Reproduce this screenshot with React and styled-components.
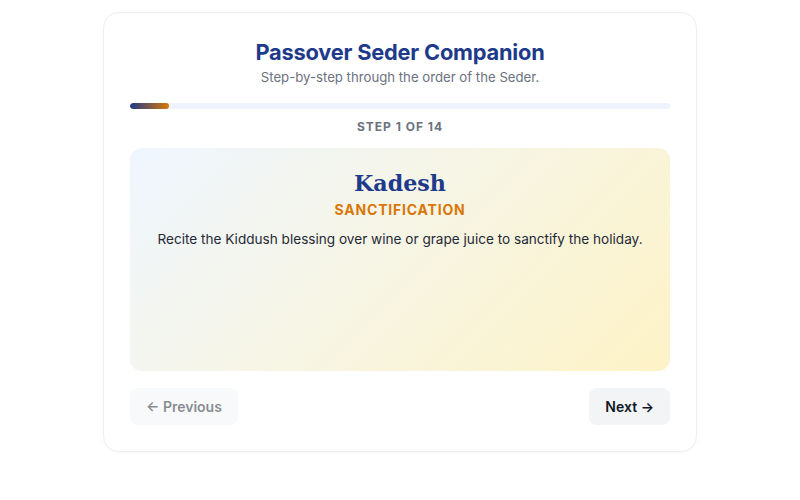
import React, { useState } from 'react';
import styled, { createGlobalStyle } from 'styled-components';

const steps = [
  {
    name: 'Kadesh',
    meaning: 'Sanctification',
    text: 'Recite the Kiddush blessing over wine or grape juice to sanctify the holiday.',
  },
  { name: 'Urchatz', meaning: 'Washing', text: 'Wash the hands without a blessing before eating the karpas.' },
  { name: 'Karpas', meaning: 'Vegetable', text: 'Dip a vegetable in salt water and eat it.' },
  { name: 'Yachatz', meaning: 'Breaking', text: 'Break the middle matzah and hide the larger half as the afikoman.' },
  { name: 'Maggid', meaning: 'Telling', text: 'Tell the story of the Exodus from Egypt.' },
  { name: 'Rachtzah', meaning: 'Washing', text: 'Wash the hands with a blessing before the meal.' },
  { name: 'Motzi', meaning: 'Blessing', text: 'Recite the blessing over bread.' },
  { name: 'Matzah', meaning: 'Matzah', text: 'Recite the blessing over matzah and eat it.' },
  { name: 'Maror', meaning: 'Bitter herbs', text: 'Eat the bitter herbs dipped in charoset.' },
  { name: 'Korech', meaning: 'Sandwich', text: 'Eat a sandwich of matzah and maror.' },
  { name: 'Shulchan Orech', meaning: 'Festive meal', text: 'Enjoy the festive holiday meal.' },
  { name: 'Tzafun', meaning: 'Hidden', text: 'Eat the afikoman.' },
  { name: 'Barech', meaning: 'Blessing', text: 'Recite Grace after Meals.' },
  { name: 'Nirtzah', meaning: 'Acceptance', text: 'Conclude the Seder with songs and hope.' },
];

const App = () => {
  const [index, setIndex] = useState(0);
  const step = steps[index];
  const progress = ((index + 1) / steps.length) * 100;

  return (
    <>
      <GlobalStyle />
      <Page>
        <Card>
          <Header>
            <Title>Passover Seder Companion</Title>
            <Subtitle>Step-by-step through the order of the Seder.</Subtitle>
          </Header>
          <Track>
            <Fill style={{ width: `${progress}%` }} />
          </Track>
          <StepLabel>
            Step {index + 1} of {steps.length}
          </StepLabel>
          <StepCard>
            <StepName>{step.name}</StepName>
            <StepMeaning>{step.meaning}</StepMeaning>
            <StepText>{step.text}</StepText>
          </StepCard>
          <Nav>
            <NavButton
              disabled={index === 0}
              onClick={() => setIndex(i => Math.max(0, i - 1))}
            >
              ← Previous
            </NavButton>
            <NavButton
              disabled={index === steps.length - 1}
              onClick={() => setIndex(i => Math.min(steps.length - 1, i + 1))}
            >
              Next →
            </NavButton>
          </Nav>
        </Card>
      </Page>
    </>
  );
};

export default App;

const GlobalStyle = createGlobalStyle`
  body {
    margin: 0;
    background: #ffffff;
    font-family: Inter, 'Noto Sans', sans-serif;
    -webkit-font-smoothing: antialiased;
  }
`;

const Page = styled.div`
  display: flex;
  justify-content: center;
  padding: 12px 0;
`;

const Card = styled.div`
  width: 594px;
  box-sizing: border-box;
  padding: 26px;
  border: 1px solid #eeeff2;
  border-radius: 16px;
  background: #ffffff;
  box-shadow: 0 1px 3px rgba(15, 23, 42, 0.03);
`;

const Header = styled.div`
  text-align: center;
  margin-bottom: 16px;
`;

const Title = styled.h1`
  margin: 0 0 3px;
  font-size: 21.8px;
  line-height: 26px;
  font-weight: 700;
  color: #1e3a8a;
  letter-spacing: -0.2px;
`;

const Subtitle = styled.p`
  margin: 0;
  font-size: 13.2px;
  line-height: 19px;
  color: #6b7280;
`;

const Track = styled.div`
  height: 6px;
  border-radius: 999px;
  background: #eef3fd;
  overflow: hidden;
`;

const Fill = styled.div`
  height: 100%;
  border-radius: 999px;
  background: linear-gradient(90deg, #1e3a8a, #d97706);
`;

const StepLabel = styled.div`
  margin-top: 10px;
  text-align: center;
  font-size: 12px;
  line-height: 16px;
  font-weight: 700;
  letter-spacing: 1px;
  text-transform: uppercase;
  color: #6b7280;
`;

const StepCard = styled.div`
  margin-top: 13px;
  min-height: 223px;
  box-sizing: border-box;
  padding: 20px 24px;
  border-radius: 12px;
  text-align: center;
  background: linear-gradient(135deg, #eff6ff 0%, #fef3c7 100%);
`;

const StepName = styled.h2`
  margin: 0;
  font-family: 'DejaVu Serif', Georgia, serif;
  font-size: 22.2px;
  line-height: 30px;
  font-weight: 700;
  color: #1e3a8a;
`;

const StepMeaning = styled.div`
  margin-top: 3px;
  font-size: 14px;
  line-height: 18px;
  font-weight: 700;
  letter-spacing: 0.8px;
  text-transform: uppercase;
  color: #d97706;
`;

const StepText = styled.p`
  margin: 10px 0 0;
  font-size: 13.6px;
  line-height: 20px;
  color: #1f2937;
`;

const Nav = styled.div`
  margin-top: 17px;
  display: flex;
  justify-content: space-between;
`;

const NavButton = styled.button`
  height: 37px;
  padding: 0 16px;
  border: none;
  border-radius: 8px;
  background: #f3f4f6;
  font-family: inherit;
  font-size: 14px;
  font-weight: 600;
  color: #111827;
  cursor: pointer;

  &:disabled {
    opacity: 0.5;
    cursor: default;
  }
`;
